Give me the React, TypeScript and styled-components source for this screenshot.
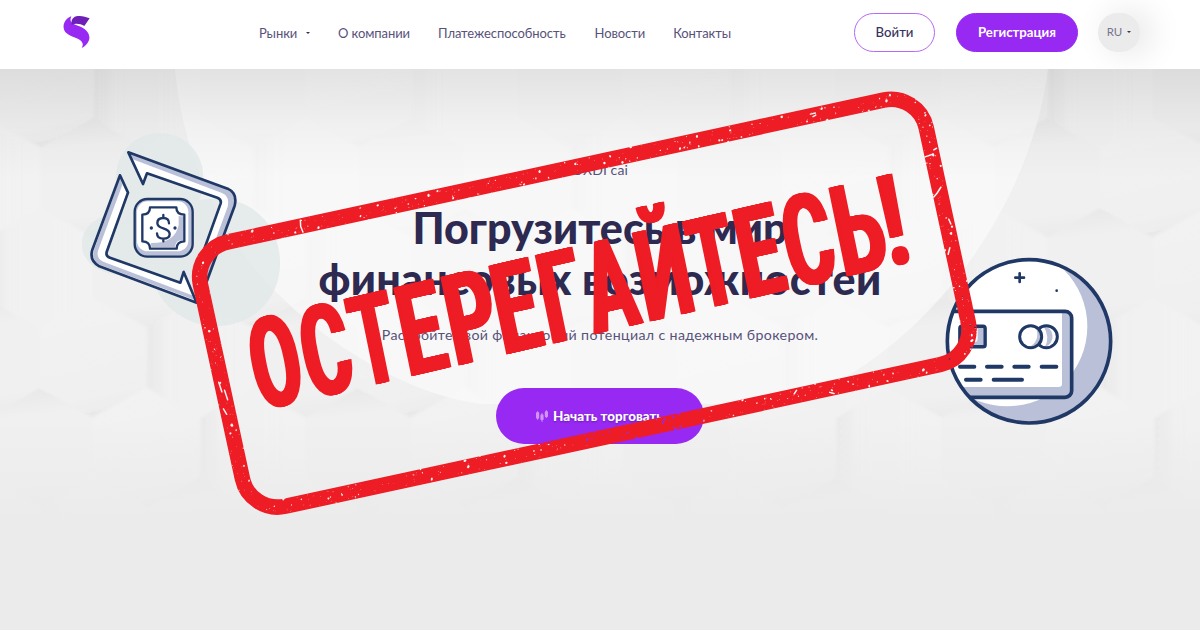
import React from "react";
import styled, { createGlobalStyle } from "styled-components";

const GlobalStyle = createGlobalStyle`
  * { box-sizing: border-box; }
  body { margin: 0; background: #ebebeb; font-family: Lato, "Noto Sans", sans-serif; }
`;

const Page = styled.div`
  position: relative;
  width: 1200px;
  height: 630px;
  overflow: hidden;
  display: flex;
  flex-direction: column;
  background: #ebebeb;
`;

const Header = styled.header`
  position: relative;
  z-index: 1;
  flex: 0 0 69px;
  display: flex;
  align-items: flex-start;
  padding-left: 62px;
  background: #fff;
  overflow: hidden;
`;

const LogoSlot = styled.a`
  width: 197px;
  padding-top: 15px;
`;

const Nav = styled.nav`
  display: flex;
  gap: 28px;
  width: 595px;
  padding-top: 23px;
`;

const NavItem = styled.a<{ $width: number }>`
  display: flex;
  align-items: center;
  justify-content: space-between;
  flex: 0 0 ${(p) => p.$width}px;
  height: 20px;
  font-size: 13px;
  letter-spacing: -0.08px;
  color: #57527a;
  white-space: nowrap;
`;

const Caret = styled.i`
  border: 2.3px solid transparent;
  border-top: 2.6px solid #37334f;
  border-bottom: 0;
`;

const Pill = styled.button<{ $filled?: boolean; $width: number }>`
  width: ${(p) => p.$width}px;
  height: 39px;
  margin: 12.5px 21px 0 0;
  padding: 0 0 1px;
  flex: none;
  border-radius: 20px;
  border: 1px solid ${(p) => (p.$filled ? "#9829f2" : "#b668f7")};
  background: ${(p) => (p.$filled ? "#9829f2" : "#fff")};
  color: ${(p) => (p.$filled ? "#fff" : "#37325c")};
  font: ${(p) => (p.$filled ? 700 : 500)} 13.2px Lato, "Noto Sans", sans-serif;
  white-space: nowrap;
`;

const Lang = styled.button`
  display: flex;
  align-items: center;
  justify-content: center;
  gap: 5px;
  width: 42px;
  height: 39px;
  margin: 12.5px 0 0 -1px;
  padding: 0 0 1px;
  border: 0;
  border-radius: 21px;
  background: #ebebeb;
  box-shadow: 10px 0 34px rgba(0, 0, 0, 0.12);
  color: #77748c;
  font: 11.5px Lato, sans-serif;
`;

const Hero = styled.main`
  position: relative;
  flex: 1;
  display: flex;
  flex-direction: column;
  align-items: center;
`;

const Backdrop = styled.svg`
  position: absolute;
  left: 0;
  top: 0;
`;

const Art = styled.svg<{ $x: number; $y: number }>`
  position: absolute;
  left: ${(p) => p.$x}px;
  top: ${(p) => p.$y}px;
`;

const Content = styled.section`
  position: relative;
  display: flex;
  flex-direction: column;
  align-items: center;
  padding-top: 91px;
`;

const Eyebrow = styled.p`
  margin: 0;
  font-size: 14px;
  line-height: 20px;
  letter-spacing: 0.1px;
  color: #57527a;
`;

const Title = styled.h1`
  margin: 22px 0 0;
  display: flex;
  flex-direction: column;
  align-items: center;
  font-size: 43px;
  line-height: 51px;
  font-weight: 900;
  color: #2d2950;
  white-space: nowrap;
`;

const TitleLine = styled.span<{ $spacing: number }>`
  letter-spacing: ${(p) => p.$spacing}px;
`;

const Lead = styled.p`
  margin: 19px 0 0;
  font-size: 14.2px;
  line-height: 24px;
  letter-spacing: 0.35px;
  color: #57527a;
  white-space: nowrap;
`;

const Cta = styled.button`
  display: flex;
  align-items: center;
  gap: 4px;
  width: 208px;
  height: 56px;
  margin-top: 41px;
  padding: 0 0 1px 39px;
  border: 0;
  border-radius: 28px;
  background: #9829f2;
  color: #fff;
  font: 900 13.4px Lato, "Noto Sans", sans-serif;
  text-shadow: 0 1px 2px rgba(40, 0, 90, 0.4);
  white-space: nowrap;
`;

const StampLayer = styled.svg`
  position: absolute;
  left: 0;
  top: 0;
  z-index: 2;
`;

const navItems = [
  { label: "Рынки", width: 51, caret: true },
  { label: "О компании", width: 72 },
  { label: "Платежеспособность", width: 128.5 },
  { label: "Новости", width: 50 },
  { label: "Контакты", width: 58 },
];

const Logo = () => (
  <svg width="29" height="34" viewBox="0 0 87 102">
    <path d="M28 4C4 13-3 41 14 55c15 13 44 14 48 31 1 5-1 9-3 13 13-7 25-20 23-34C79 42 57 36 42 30 27 24 22 18 28 4z" fill="#9829f2" />
    <path d="M29 29C26 15 33 4 48 3c13-1 23 2 35 7L67 33C56 27 42 24 29 29z" fill="#6f1fb8" />
  </svg>
);

function Hexes() {
  const out: React.ReactNode[] = [];
  for (let k = -1; k < 5; k++) {
    for (let n = -4; n < 10; n++) {
      const x = (k % 2 === 0 ? 305 : 252) + n * 106;
      const y = 118 + k * 90 - 69;
      const tone = Math.abs((k * 7 + n * 5 + 40) % 3);
      out.push(
        <path
          key={`${k}/${n}`}
          d={`M${x} ${y}l53 30v60l-53 30l-53-30v-60z`}
          fill={["url(#hexA)", "url(#hexB)", "url(#hexC)"][tone]}
        />
      );
    }
  }
  return <g filter="url(#soften)">{out}</g>;
}

const HeroBackdrop = () => (
  <Backdrop width="1200" height="561" viewBox="0 0 1200 561">
    <defs>
      <filter id="soften" x="0" y="0" width="1" height="1">
        <feGaussianBlur stdDeviation="1.1" />
      </filter>
      <linearGradient id="hexA" x1=".5" y1="0" x2="0.6" y2="1">
        <stop offset="0" stopColor="#000" stopOpacity=".03" />
        <stop offset=".22" stopColor="#000" stopOpacity="0" />
        <stop offset=".8" stopColor="#000" stopOpacity="0" />
        <stop offset="1" stopColor="#000" stopOpacity=".022" />
      </linearGradient>
      <linearGradient id="hexB" x1="0" y1="0" x2="1" y2="0">
        <stop offset="0" stopColor="#000" stopOpacity=".014" />
        <stop offset=".2" stopColor="#fff" stopOpacity=".05" />
        <stop offset="1" stopColor="#fff" stopOpacity=".15" />
      </linearGradient>
      <linearGradient id="hexC" x1=".4" y1="0" x2=".6" y2="1">
        <stop offset="0" stopColor="#fff" stopOpacity=".15" />
        <stop offset=".75" stopColor="#fff" stopOpacity="0" />
        <stop offset="1" stopColor="#000" stopOpacity=".035" />
      </linearGradient>
      <linearGradient id="topShade" x1="0" y1="0" x2="0" y2="1">
        <stop offset="0" stopColor="#000" stopOpacity=".085" />
        <stop offset=".5" stopColor="#000" stopOpacity=".03" />
        <stop offset="1" stopColor="#000" stopOpacity="0" />
      </linearGradient>
      <linearGradient id="fade" x1="0" y1="0" x2="0" y2="1">
        <stop offset="0" stopColor="#ebebeb" stopOpacity="0" />
        <stop offset="1" stopColor="#ebebeb" />
      </linearGradient>
    </defs>
    <rect width="1200" height="561" fill="#f0f0f0" />
    <Hexes />
    <path
      d="M175 0C181 72 212 160 277 224C330 277 405 324 480 335H790C935 280 1032 130 1048 0z"
      fill="#fbfbfb"
      fillOpacity=".68"
    />
    <rect width="1200" height="110" fill="url(#topShade)" />
    <rect y="350" width="1200" height="105" fill="url(#fade)" />
    <rect y="454" width="1200" height="107" fill="#ebebeb" />
  </Backdrop>
);

const ExchangeArt = () => (
  <Art $x={70} $y={41} width="260" height="220" viewBox="0 0 780 660" fill="none" strokeLinejoin="round" strokeLinecap="round">
    <g fill="#e1e7e7" fillOpacity=".8">
      <path d="M138 200a131 131 0 1 1 262 0c0 28-3 48-12 70 150-28 242 72 242 188 0 110-83 190-190 190-105 0-184-75-195-158C120 515 36 470 36 405c0-52 40-89 103-90 20-5 25-15 23-29-15-25-24-50-24-86z" />
    </g>
    <path d="M175 127L473 236Q503 250 494 287L411 512 377 489 452 280Q455 268 442 263L231 190 219 222z" fill="#fff" />
    <path d="M184 146L456 249Q480 258 473 290L396 500 411 512 494 287Q503 250 473 236L175 127z" fill="#b9c0d7" />
    <path d="M150 196L67 419Q57 452 88 469L380 578 341 486 331 518 120 443Q107 439 110 426L174 248z" fill="#fff" />
    <path d="M150 205L72 419Q62 450 89 464L374 570 366 556 100 455Q78 446 84 422L157 224z" fill="#b9c0d7" />
    <g stroke="#1f3866" strokeWidth="8">
      <path d="M411 512L494 287Q503 250 473 236L175 127 219 222 231 190 442 263Q455 268 452 280L377 489" />
      <path d="M150 196L67 419Q57 452 88 469L380 578 341 486 331 518 120 443Q107 439 110 426L174 248z" />
    </g>
    <rect x="194" y="267" width="174" height="173" rx="38" fill="#b9c0d7" stroke="#1f3866" strokeWidth="7" />
    <rect x="201" y="274" width="154" height="150" rx="32" fill="#fff" />
    <path d="M240 292H319Q319 314 343 314V394Q320 394 320 416H240Q240 394 217 394V314Q240 314 240 292z" fill="#fff" stroke="#1f3866" strokeWidth="7" />
    <path d="M326 318Q330 319 339 319V390Q315 390 316 411H244L243 399Q315 400 326 345z" fill="#b9c0d7" />
    <path d="M297 340Q297 324 280 324Q262 324 262 339Q262 350 280 355Q299 361 299 372Q299 386 280 386Q261 386 261 370M280 315V324M280 386V394" stroke="#1f3866" strokeWidth="7" />
    <circle cx="244" cy="354" r="5" fill="#1f3866" />
    <circle cx="315" cy="354" r="5" fill="#1f3866" />
  </Art>
);

const CardArt = () => (
  <Art $x={930} $y={171} width="200" height="200" viewBox="0 0 600 600" fill="none" strokeLinejoin="round" strokeLinecap="round">
    <defs>
      <clipPath id="coin"><circle cx="297" cy="304" r="245" /></clipPath>
    </defs>
    <circle cx="297" cy="304" r="245" fill="#b9c0d7" />
    <g clipPath="url(#coin)">
      <circle cx="232" cy="259" r="240" fill="#fff" />
      <rect x="0" y="214" width="425" height="258" rx="24" fill="#b9c0d7" />
      <path d="M0 219H396V432Q396 441 386 441H0z" fill="#fff" />
      <rect x="0" y="214" width="425" height="258" rx="20" stroke="#1f3866" strokeWidth="11" />
      <rect x="90" y="259" width="75" height="61" rx="6" fill="#fff" stroke="#1f3866" strokeWidth="11" />
      <path d="M143 265H160V315H96V307H133Q143 307 143 295z" fill="#b9c0d7" />
      <circle cx="349" cy="290" r="33" fill="#fff" />
      <path d="M340 257a33 33 0 0 1 5 64q16-30-5-64z" fill="#b9c0d7" />
      <circle cx="349" cy="290" r="33" stroke="#1f3866" strokeWidth="9" />
      <circle cx="302" cy="290" r="33" fill="#fff" />
      <path d="M318 262a33 33 0 0 1-22 60q36-18 22-60z" fill="#b9c0d7" />
      <circle cx="302" cy="290" r="33" stroke="#1f3866" strokeWidth="9" />
      <path d="M90 380H133M171 380H215M253 380H296M335 380H379M108 419H152M191 419H276" stroke="#1f3866" strokeWidth="12" />
    </g>
    <path d="M269 100V126M256 113H282" stroke="#1f3866" strokeWidth="8" />
    <circle cx="380" cy="152" r="4" fill="#1f3866" />
    <circle cx="297" cy="304" r="245" stroke="#1f3866" strokeWidth="11" />
  </Art>
);

const CandlesIcon = () => (
  <svg width="14" height="14" viewBox="0 0 14 14" fill="#cf95fb" stroke="#cf95fb">
    <path d="M2.6 2v9M7 4v9M11.4 1v8" strokeWidth=".8" fill="none" />
    <rect x="1" y="3" width="3.2" height="7" rx="1.4" stroke="none" />
    <rect x="5.4" y="5.3" width="3.2" height="6" rx="1.4" stroke="none" />
    <rect x="9.8" y="2" width="3.2" height="6.5" rx="1.4" stroke="none" />
  </svg>
);

/* Left edge and ink width of every letter along the stamp's baseline. */
const stampLetters: [string, number, number][] = [
  ["О", -5, 47.5],
  ["С", 47.5, 47],
  ["Т", 97.5, 45],
  ["Е", 149, 41.5],
  ["Р", 197.5, 46],
  ["Е", 246.5, 41.5],
  ["Г", 294.3, 39],
  ["А", 335.7, 53],
  ["Й", 393.3, 47.4],
  ["Т", 444.8, 45.5],
  ["Е", 496, 41.5],
  ["С", 542, 47.5],
  ["Ь", 595, 46],
  ["!", 643.5, 18],
];

const STAMP_SIZE = 127;

/* Condensing thins the stems, so the word is overprinted sideways by this
   many pixels on each side to bring their weight back. */
const SPREAD = 2.1;

function fitLetters() {
  const ctx = document.createElement("canvas").getContext("2d")!;
  ctx.font = `700 ${STAMP_SIZE}px Roboto`;
  return stampLetters.map(([ch, left, width]) => {
    const m = ctx.measureText(ch);
    const ink = m.actualBoundingBoxRight + m.actualBoundingBoxLeft;
    const k = (width - SPREAD * 2) / ink;
    return {
      ch,
      x: left + SPREAD + m.actualBoundingBoxLeft * k,
      length: m.width * k,
    };
  });
}

function specks() {
  let seed = 71;
  const rnd = () => {
    seed = (seed * 16807) % 2147483647;
    return seed / 2147483647;
  };
  const out: React.ReactNode[] = [];
  for (let i = 0; i < 760; i++) {
    const onLong = rnd() < 0.7;
    const far = rnd() < 0.5;
    const d = rnd() * 16;
    const t = Math.floor(rnd() * 34) / 34 + Math.pow(rnd(), 1.5) * 0.06;
    const x = onLong ? t * 758 : far ? 758 - d : d;
    const y = onLong ? (far ? 286 - d : d) : t * 286;
    const r = 0.25 + Math.pow(rnd(), 4) * 1;
    out.push(
      <ellipse key={i} cx={x} cy={y} rx={r} ry={r * (0.6 + rnd())} transform={`rotate(${Math.floor(rnd() * 90)} ${x} ${y})`} />
    );
  }
  return out;
}

const Stamp = () => (
  <StampLayer width="1200" height="630" viewBox="0 0 1200 630">
    <defs>
      <mask id="worn" maskUnits="userSpaceOnUse" x="-5" y="-5" width="770" height="300">
        <rect x="-5" y="-5" width="770" height="300" fill="#fff" />
        <g fill="#000">{specks()}</g>
        <path
          d="M743 72l8-1M753 67l3-1M743 113l4-3 5-5M753 138l1 5M745 172l3-6M5 143l1 10M9 152l1 10M4 170l2 6M119 2l-1 6 1 6M640 6l5 0M642 9l3-1M430 277l3-4M600 282l4 2M565 276l3-3"
          fill="none"
          stroke="#000"
          strokeWidth="1.5"
          strokeLinecap="round"
        />
      </mask>
    </defs>
    <g transform="translate(584.3 303.2) rotate(-12.2) translate(-379 -143)">
      <rect x="7.75" y="7.75" width="742.5" height="270.5" rx="36" fill="none" stroke="#ee1c24" strokeWidth="15.5" mask="url(#worn)" />
    </g>
    <g transform="matrix(.9748 -.2233 .2011 .9796 266 409.5)">
      <text
        id="word"
        fontFamily="Roboto, sans-serif"
        fontWeight="700"
        fontSize={STAMP_SIZE}
        fill="#ee1c24"
      >
        {fitLetters().map((l, i) => (
          <tspan key={i} x={l.x} y={0} textLength={l.length} lengthAdjust="spacingAndGlyphs">
            {l.ch}
          </tspan>
        ))}
      </text>
      <use href="#word" x={-SPREAD} />
      <use href="#word" x={-SPREAD / 2} />
      <use href="#word" x={SPREAD / 2} />
      <use href="#word" x={SPREAD} />
    </g>
  </StampLayer>
);

export default function App() {
  return (
    <Page>
      <GlobalStyle />
      <Header>
        <LogoSlot><Logo /></LogoSlot>
        <Nav>
          {navItems.map((item) => (
            <NavItem key={item.label} $width={item.width}>
              {item.label}
              {item.caret && <Caret />}
            </NavItem>
          ))}
        </Nav>
        <Pill $width={81}>Войти</Pill>
        <Pill $filled $width={122}>Регистрация</Pill>
        <Lang>RU <Caret /></Lang>
      </Header>
      <Hero>
        <HeroBackdrop />
        <ExchangeArt />
        <CardArt />
        <Content>
          <Eyebrow>OXDI cai</Eyebrow>
          <Title>
            <TitleLine $spacing={0}>Погрузитесь в мир</TitleLine>
            <TitleLine $spacing={0.25}>финансовых возможностей</TitleLine>
          </Title>
          <Lead>Раскройте свой финансовый потенциал с надежным брокером.</Lead>
          <Cta><CandlesIcon />Начать торговать</Cta>
        </Content>
      </Hero>
      <Stamp />
    </Page>
  );
}
